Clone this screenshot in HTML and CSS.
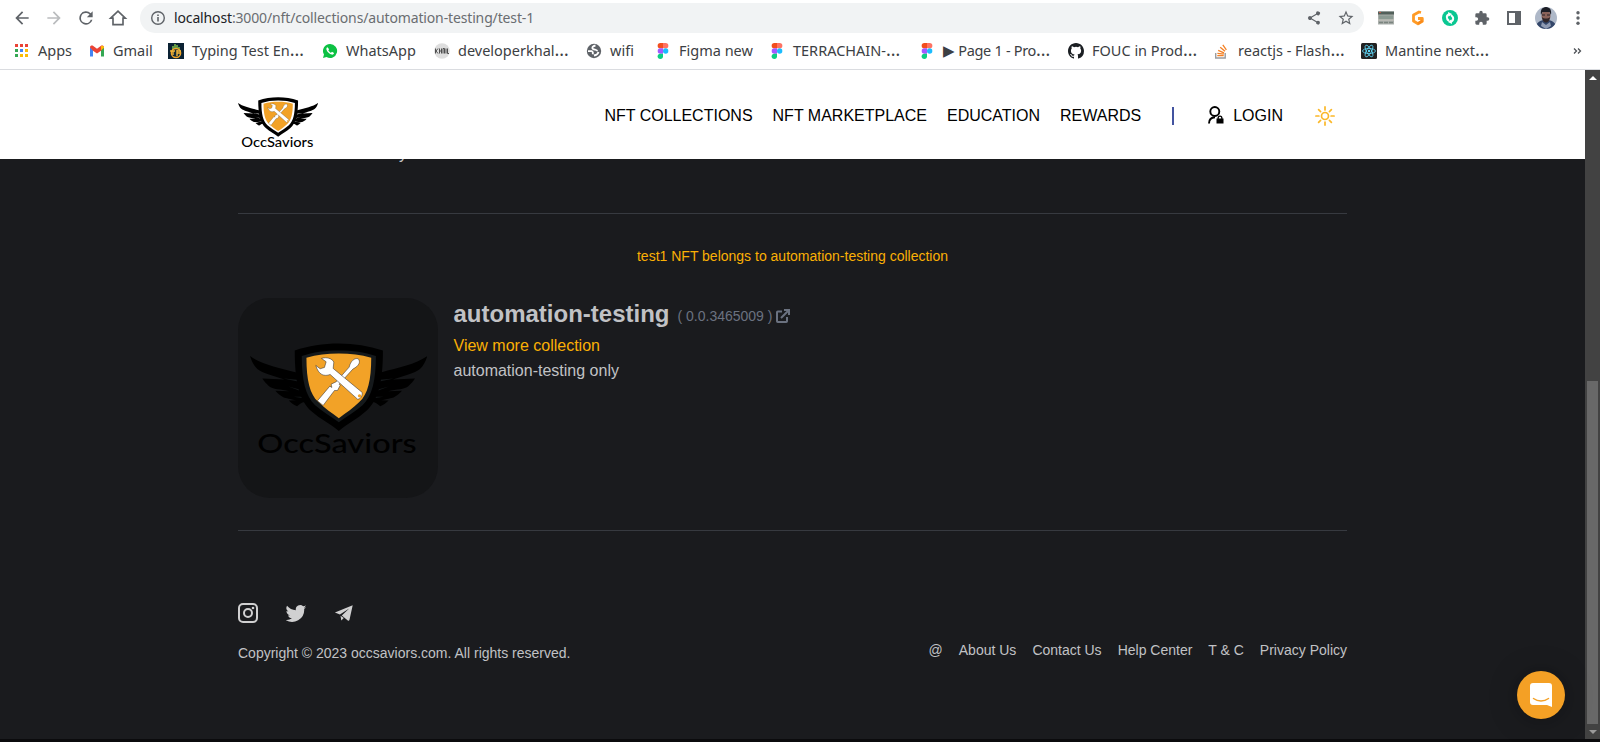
FILE: index.html
```html
<!DOCTYPE html>
<html lang="en">
<head>
<meta charset="utf-8">
<title>test-1 | OccSaviors</title>
<link rel="stylesheet" href="styles.css">
</head>
<body>
<svg class="defs" aria-hidden="true">
  <symbol id="logo" viewBox="75 174 530 350" overflow="visible">
    <g id="wing-left">
      <path class="ink" d="M75 213C110 238 160 247 214 262L246 352C232 346 226 356 216 363C208 360 198 354 191 346L214 345C196 343 182 338 176 337C166 331 158 326 151 317L192 318C168 312 142 312 132 303C124 296 117 288 112 280L178 283C148 274 112 264 97 252C86 242 80 228 75 213Z"/>
      <path class="gap" d="M176 280L216 284L218 289ZM190 304L226 314L228 318ZM206 335L236 335L236 339Z"/>
    </g>
    <use href="#wing-left" transform="translate(681 0) scale(-1 1)"/>
    <path class="ink" d="M209 196C250 182 295 175 341 175C387 175 430 182 473 196C473 290 460 345 422 378C395 402 368 414 341 437C314 414 286 402 259 378C222 345 209 290 209 196Z"/>
    <path class="ring" d="M230 213C265 201 300 196 341 196C382 196 417 201 452 213C452 285 441 333 412 360C390 380 365 392 341 411C317 392 292 380 270 360C241 333 230 285 230 213Z"/>
    <path class="gold" d="M244 218C275 208 306 205 341 205C376 205 407 208 438 218C438 285 428 327 403 350C384 370 362 383 341 399C320 383 298 370 279 350C254 327 244 285 244 218Z"/>
    <path class="tool" d="M277 347L314 303L320 307L318 297L333 290L372 246C376 228 388 218 399 221C407 230 402 242 383 252L342 297L345 301L337 316L328 316L300 353L294 361Z"/>
    <path class="tool" d="M289 220C304 215 321 220 326 231L324 250L411 322C412 334 405 342 397 342L315 268C298 275 280 270 272 241L285 251L298 247L303 230Z"/>
    <circle class="gold" cx="403" cy="332" r="5"/>
    <text class="ink wordmark" x="97" y="503" font-size="82" textLength="477" lengthAdjust="spacingAndGlyphs">OccSaviors</text>
  </symbol>
  <symbol id="figma" viewBox="0 0 10 15">
    <path fill="#f24e1e" d="M5 0H2.5a2.5 2.5 0 0 0 0 5H5z"/><path fill="#ff7262" d="M5 0h2.5a2.5 2.5 0 0 1 0 5H5z"/>
    <path fill="#a259ff" d="M5 5H2.5a2.5 2.5 0 0 0 0 5H5z"/><circle fill="#1abcfe" cx="7.5" cy="7.5" r="2.5"/>
    <path fill="#0acf83" d="M5 10H2.5A2.5 2.5 0 1 0 5 12.5z"/>
  </symbol>
</svg>

<div class="browser">
  <div class="toolbar">
    <div class="nav-buttons">
      <svg viewBox="0 0 24 24"><path fill="#5f6368" d="M20 11H7.83l5.59-5.59L12 4l-8 8 8 8 1.41-1.41L7.83 13H20z"/></svg>
      <svg viewBox="0 0 24 24"><path fill="#babcbe" d="M12 4l-1.41 1.41L16.17 11H4v2h12.17l-5.58 5.59L12 20l8-8z"/></svg>
      <svg viewBox="0 0 24 24"><path fill="#5f6368" d="M17.65 6.35A8 8 0 1 0 19.73 14h-2.08A6 6 0 1 1 12 6c1.66 0 3.14.69 4.22 1.78L13 11h7V4z"/></svg>
      <svg viewBox="0 0 24 24"><path fill="none" stroke="#5f6368" stroke-width="2" d="M3.2 12.2L12 3.8l8.800 8.4H18V20H6v-7.800z"/></svg>
    </div>
    <div class="omnibox">
      <svg class="info" viewBox="0 0 16 16"><circle cx="8" cy="8" r="6.300" fill="none" stroke="#5f6368" stroke-width="1.400"/><path fill="#5f6368" d="M7.200 7h1.600v4.500H7.200zM7.200 4.400h1.600V6H7.200z"/></svg>
      <span class="url"><b>localhost</b>:3000/nft/collections/automation-testing/test-1</span>
      <svg class="share" viewBox="0 0 24 24"><path fill="#5f6368" d="M18 16.080c-.76 0-1.440.3-1.960.770L8.910 12.700a3 3 0 0 0 0-1.390l7.050-4.110A3 3 0 1 0 15 5c0 .24.040.47.090.7L8.040 9.810a3 3 0 1 0 0 4.380l7.120 4.160A2.920 2.920 0 1 0 18 16.080z"/></svg>
      <svg class="star" viewBox="0 0 24 24"><path fill="#5f6368" fill-rule="evenodd" d="M22 9.240l-7.190-.62L12 2 9.190 8.630 2 9.240l5.460 4.730L5.820 21 12 17.270 18.180 21l-1.630-7.030zM12 15.400l-3.760 2.270 1-4.280-3.320-2.880 4.380-.38L12 6.100l1.710 4.040 4.380.38-3.320 2.880 1 4.280z"/></svg>
    </div>
    <div class="extensions">
      <svg viewBox="0 0 16 16"><path fill="#a9aeaa" d="M0 1.500h16v13H0z"/><path fill="#52605a" d="M0 1.500h16v3H0z"/><path fill="#c05848" d="M1 2h2v1H1z"/><path fill="#8b9a92" d="M1 5.500h14v4H1z"/><path stroke="#c9c6bf" d="M0 10h16"/><path stroke="#7b857f" stroke-width="1.500" d="M1 12.500h14" stroke-dasharray="4 1"/></svg>
      <svg viewBox="0 0 16 16"><path fill="none" stroke="#ff9b26" stroke-width="2.800" stroke-linejoin="round" d="M11 2.500L9 2 3.500 5v6l4.500 2.800 4.300-2.600V8.500H8"/><path fill="none" stroke="#f98a1c" stroke-width="2.600" d="M12.500 10.500L8 13.600"/></svg>
      <svg viewBox="0 0 16 16"><circle cx="8" cy="8" r="8" fill="#0ac792"/><g fill="none" stroke="#fff" stroke-width="2"><path d="M7.500 4.300C4 5 4 8.500 7 11M8.500 11.700C12 11 12 7.500 9 5"/></g><path fill="#fff" d="M6 2l4 2-3.500 2.800zM10 14l-4-2 3.500-2.800z"/></svg>
      <svg viewBox="0 0 24 24"><path fill="#5f6368" d="M20.500 11H19V7a2 2 0 0 0-2-2h-4V3.500a2.500 2.500 0 0 0-5 0V5H4a2 2 0 0 0-2 2v3.800h1.500a2.700 2.700 0 0 1 0 5.400H2V20a2 2 0 0 0 2 2h3.800v-1.500a2.700 2.700 0 0 1 5.400 0V22H17a2 2 0 0 0 2-2v-4h1.500a2.500 2.500 0 0 0 0-5z"/></svg>
      <svg viewBox="0 0 16 16"><path fill="#5f6368" fill-rule="evenodd" d="M1 1h14v14H1zM3 3v10h6V3z"/></svg>
      <svg class="avatar" viewBox="0 0 22 22"><clipPath id="face"><circle cx="11" cy="11" r="11"/></clipPath><g clip-path="url(#face)"><path fill="#aeb8c8" d="M0 0h22v22H0z"/><path fill="#34476a" d="M0 22c1-6 4-8 8-9h6c4 1 7 3 8 9z"/><ellipse cx="11" cy="9" rx="4.500" ry="6" fill="#8a6259"/><path fill="#1d1e26" d="M6 8C5 2 8 0 11 0s6 2 5 8l-1.500-3h-7z"/><path fill="#302629" d="M7 10c2 2 6 2 8 0-.5 4-2 5.500-4 5.500S7.500 14 7 10z"/><path stroke="#282026" d="M7 8h3M12 8h3"/><path fill="#8e9ab2" d="M7 15l4 3 4-3 1 4-5 3-5-3z"/></g></svg>
      <svg viewBox="0 0 16 16"><g fill="#5f6368"><circle cx="8" cy="2.700" r="1.700"/><circle cx="8" cy="8" r="1.700"/><circle cx="8" cy="13.300" r="1.700"/></g></svg>
    </div>
  </div>
  <div class="bookmarks">
    <a class="bm"><svg viewBox="0 0 16 16"><path stroke="#ea4335" stroke-width="3" d="M1 2.500h3M6 2.500h3M11 2.500h3"/><path stroke="#34a853" stroke-width="3" d="M1 7.500h3M1 12.500h3"/><path stroke="#4285f4" stroke-width="3" d="M6 7.500h3"/><path stroke="#fbbc04" stroke-width="3" d="M11 7.500h3M6 12.500h3M11 12.500h3"/></svg><span>Apps</span></a>
    <a class="bm"><svg viewBox="0 0 16 16"><path fill="#4285f4" d="M1 4v9.500h3V7z"/><path fill="#34a853" d="M15 4v9.500h-3V7z"/><path fill="#ea4335" d="M1 4.500C1 2.500 3 2 4.300 3L8 5.800 11.700 3C13 2 15 2.500 15 4.500L12 7.800 8 10.500 4 7.800z"/><path fill="#fbbc04" d="M12 3.200c1.300-1 3-.5 3 1.600l-3 2.500z"/></svg><span>Gmail</span></a>
    <a class="bm"><svg viewBox="0 0 16 16"><path fill="#0b2233" d="M0 0h16v16H0z"/><path stroke="#7ab648" stroke-width="1.600" d="M5 7V3M7 6V1M9 6V2M11 7V4"/><circle cx="8" cy="10" r="4.600" fill="#152b36" stroke="#f0a52b" stroke-width="1.500"/><path stroke="#f2b63b" stroke-width="1.400" d="M2 8h5M5 8v4M9 7v6M9 8h4M9 10h3"/></svg><span>Typing Test En<i>…</i></span></a>
    <a class="bm"><svg viewBox="0 0 16 16"><path fill="#0cc143" d="M8 1a7 7 0 0 0-6 10.600L1 15l3.500-1A7 7 0 1 0 8 1z"/><path fill="#fff" d="M5.500 4.200c-.9.300-1.400 1.400-1 2.600.8 2.300 3 4.400 5.300 4.800 1.100.2 2-.7 2.200-1.700L10 8.800l-1 1C7.900 9.400 6.900 8.400 6.300 7.200l.8-.9z"/></svg><span>WhatsApp</span></a>
    <a class="bm"><svg viewBox="0 0 16 16"><circle cx="8" cy="8" r="7.800" fill="#dedede"/><path stroke="#4f4f4f" fill="none" d="M1.500 5.500v5M4 5.500L2 8l2 2.500M5.500 5.500v5M5.500 8h2M7.500 5.500v5M9 10.500v-5h1.500v5M12 5.500v5M13.500 5.500v5h1.500"/></svg><span>developerkhal<i>…</i></span></a>
    <a class="bm"><svg viewBox="0 0 16 16"><circle cx="8" cy="8" r="7.200" fill="#5f6368"/><path fill="none" stroke="#fff" stroke-width="1.800" d="M9.500 2.500C6.500 3 5.500 5 7 6s4.200.3 4.300 2.300M2 8.200h3.500c1.500.6 1.800 1.800 1 3M12.500 9c-.5 2-2.300 3.200-4.500 3.500"/></svg><span>wifi</span></a>
    <a class="bm"><svg><use href="#figma"/></svg><span>Figma new</span></a>
    <a class="bm"><svg><use href="#figma"/></svg><span>TERRACHAIN-<i>…</i></span></a>
    <a class="bm tight"><svg><use href="#figma"/></svg><span>▶ Page 1 - Pro<i>…</i></span></a>
    <a class="bm"><svg viewBox="0 0 16 16"><path fill="#1b1f23" d="M8 0C3.580 0 0 3.580 0 8c0 3.540 2.290 6.530 5.470 7.590.4.070.55-.17.55-.38 0-.19-.01-.82-.01-1.490-2.010.37-2.530-.49-2.690-.94-.09-.23-.48-.94-.82-1.130-.28-.15-.68-.52-.01-.53.63-.01 1.080.58 1.230.82.72 1.210 1.870.87 2.330.66.070-.52.280-.87.510-1.070-1.780-.2-3.640-.89-3.640-3.950 0-.87.310-1.590.82-2.150-.08-.2-.36-1.020.08-2.120 0 0 .67-.21 2.200.82a7.600 7.600 0 0 1 4 0c1.530-1.040 2.200-.82 2.200-.82.440 1.100.160 1.920.080 2.120.510.560.820 1.270.820 2.150 0 3.070-1.870 3.750-3.650 3.950.290.250.540.730.540 1.480 0 1.070-.01 1.930-.01 2.200 0 .21.150.460.550.380A8.010 8.010 0 0 0 16 8c0-4.420-3.580-8-8-8z"/></svg><span>FOUC in Prod<i>…</i></span></a>
    <a class="bm"><svg viewBox="0 0 16 16"><path fill="none" stroke="#9a9c9f" stroke-width="1.400" d="M1.700 10v5h9.500v-5"/><path stroke="#f48024" stroke-width="1.300" d="M3.300 12.700H9.700M3.400 10.300l6.400.9M4.200 7.300l5.800 2.500M6.200 4.300l4.800 4M8.800 1.800l3.600 5"/></svg><span>reactjs - Flash<i>…</i></span></a>
    <a class="bm"><svg viewBox="0 0 16 16"><rect width="16" height="16" rx="1.500" fill="#222"/><g fill="none" stroke="#61dafb" stroke-width=".8"><ellipse cx="8" cy="8" rx="6.500" ry="2.500"/><ellipse cx="8" cy="8" rx="6.500" ry="2.500" transform="rotate(60 8 8)"/><ellipse cx="8" cy="8" rx="6.500" ry="2.500" transform="rotate(120 8 8)"/></g><circle cx="8" cy="8" r="1.200" fill="#61dafb"/></svg><span>Mantine next<i>…</i></span></a>
    <svg class="more" viewBox="0 0 9 8"><path fill="none" stroke="#4d5156" stroke-width="1.300" d="M1 1.500L3.500 4 1 6.500M5 1.500L7.500 4 5 6.500"/></svg>
  </div>
</div>

<div class="viewport">
  <div class="page">
    <header class="site-header">
      <svg class="brand"><use href="#logo"/></svg>
      <nav class="menu">
        <a>NFT COLLECTIONS</a><a>NFT MARKETPLACE</a><a>EDUCATION</a><a>REWARDS</a>
      </nav>
      <span class="divider"></span>
      <a class="login">
        <svg viewBox="0 0 16 18"><g fill="none" stroke="#000" stroke-width="1.900"><circle cx="6.800" cy="5.500" r="4.500"/><path d="M1 17.500c0-3.600 2.200-6 6-6.200"/></g><path fill="#000" fill-rule="evenodd" d="M8.500 12.500h1V12a2.500 2.500 0 0 1 5 0v.5h1v5h-7zm2.300 0h2.400V12a1.200 1.200 0 0 0-2.400 0z"/></svg>
        <span>LOGIN</span>
      </a>
      <svg class="sun" viewBox="0 0 20 20"><g fill="none" stroke="#fbb829" stroke-width="1.700"><circle cx="10" cy="10" r="3.500"/><path stroke-linecap="round" d="M10 .9v3M10 16.100v3M.9 10h3M16.100 10h3M3.600 3.600l2 2M14.400 14.400l2 2M3.600 16.400l2-2M14.400 5.600l2-2"/></g></svg>
    </header>

    <main>
      <div class="scrolled"><p>y</p></div>
      <hr>
      <p class="caption">test1 NFT belongs to automation-testing collection</p>
      <section class="collection">
        <div class="thumb"><svg><use href="#logo"/></svg></div>
        <div class="details">
          <div class="heading">
            <h2>automation-testing</h2>
            <span class="token">( 0.0.3465009 )</span>
            <svg viewBox="0 0 14 14"><path fill="none" stroke="#6b7280" stroke-width="2" d="M6 2.500H1.800a.8.800 0 0 0-.8.800v8.900c0 .5.300.8.800.8h8.400c.5 0 .8-.3.800-.8V8M8 1h5v5M13 1L5 9"/></svg>
          </div>
          <a class="view-more">View more collection</a>
          <p>automation-testing only</p>
        </div>
      </section>
      <hr>
    </main>

    <footer>
      <div class="about">
        <div class="social">
          <svg viewBox="0 0 20 20"><g fill="none" stroke="#d0d0d1" stroke-width="2"><rect x="1" y="1" width="18" height="18" rx="4"/><circle cx="10" cy="10" r="4"/></g><circle cx="15" cy="5" r="1.300" fill="#d0d0d1"/></svg>
          <svg viewBox="2 2 20 20"><path fill="#d0d0d1" d="M22.460 6c-.77.350-1.600.580-2.460.690a4.300 4.300 0 0 0 1.880-2.380c-.83.500-1.750.850-2.720 1.050A4.280 4.280 0 0 0 11.870 9.260 12.130 12.130 0 0 1 3.050 4.790a4.280 4.280 0 0 0 1.320 5.710c-.7 0-1.360-.2-1.930-.5v.030c0 2.080 1.480 3.820 3.440 4.210a4.200 4.200 0 0 1-1.930.070 4.280 4.280 0 0 0 4 2.980A8.520 8.520 0 0 1 1.540 19a12.130 12.130 0 0 0 18.670-10.800c0-.19 0-.37-.010-.55A8.700 8.700 0 0 0 22.460 6z"/></svg>
          <svg viewBox="0 0 20 20"><path fill="#d0d0d1" d="M18.700 2.200L.9 9.600l5 1.900 9.300-6.100-7.400 7.200 6 4.900c.8.400 1.400.1 1.700-.8zM6.500 12.700l.8 4.800 2.500-2.400z"/></svg>
        </div>
        <p>Copyright © 2023 occsaviors.com. All rights reserved.</p>
      </div>
      <nav class="links"><a>@</a><a>About Us</a><a>Contact Us</a><a>Help Center</a><a>T &amp; C</a><a>Privacy Policy</a></nav>
    </footer>
  </div>
  <div class="scrollbar">
    <i class="arrow up"></i>
    <i class="thumb-bar"></i>
    <i class="arrow down"></i>
  </div>
</div>
<div class="screen-edge"></div>

<button class="chat" aria-label="Chat"><svg viewBox="0 0 22 24"><path fill="#fff" d="M3 0h16a3 3 0 0 1 3 3v21l-5-2H3a3 3 0 0 1-3-3V3a3 3 0 0 1 3-3z"/><path fill="none" stroke="#f4a025" stroke-width="1.500" stroke-linecap="round" d="M3.500 15.500c4.500 3.300 10.500 3.300 15 0"/></svg></button>
</body>
</html>
```

FILE: styles.css
```css
* { box-sizing: border-box; }

body {
  margin: 0;
  width: 1600px;
  height: 742px;
  overflow: hidden;
  display: flex;
  flex-direction: column;
  font-family: "Liberation Sans", Arial, sans-serif;
  background: #1a1b1e;
  --logo-ring: #fff;
}

p, h2 { margin: 0; }
svg { display: block; flex: none; }
.defs { position: absolute; width: 0; height: 0; }

/* Browser chrome */
.browser {
  flex: none;
  height: 70px;
  background: #fff;
  border-bottom: 1px solid #dadce0;
  font-family: "Noto Sans", "Open Sans", sans-serif;
}

.toolbar {
  height: 35px;
  padding: 3px 14px 2px 12px;
  display: flex;
  align-items: center;
}

.nav-buttons { display: flex; gap: 12px; width: 128px; }
.nav-buttons svg { width: 20px; height: 20px; }

.omnibox {
  width: 1224px;
  height: 30px;
  padding: 0 9px 0 10px;
  border-radius: 15px;
  background: #f1f3f4;
  display: flex;
  align-items: center;
}

.info { width: 16px; height: 16px; }
.url { flex: 1; margin-left: 8px; padding-bottom: 2px; font-size: 14px; letter-spacing: -.14px; color: #6a6d71; }
.url b { font-weight: 400; color: #202124; }
.share { width: 16px; height: 16px; margin-right: 15px; }
.star { width: 18px; height: 18px; }

.extensions { flex: 1; padding-left: 14px; display: flex; align-items: center; gap: 16px; }
.extensions svg { width: 16px; height: 16px; }
.extensions .avatar { width: 22px; height: 22px; margin: 0 -3px; }

.bookmarks {
  display: grid;
  grid-template-columns: 75px 79px 154px 112px 152px 69px 114px 150px 149px 146px 147px 212px 9px;
  align-items: center;
  height: 32px;
  padding-left: 14px;
}

.bm {
  display: flex;
  align-items: center;
  gap: 8px;
  height: 24px;
  font-size: 14.5px;
  line-height: 22px;
  white-space: nowrap;
  color: #3c4043;
}

.bm span { height: 24px; }
.bm i { font-style: normal; font-size: 18px; line-height: 0; }
.tight { letter-spacing: -.3px; }
.bm svg { width: 16px; height: 16px; }
.more { width: 9px; height: 8px; }

/* Page */
.viewport { flex: none; height: 669px; display: flex; }
.page { width: 1585px; color: #c1c2c5; }

.site-header {
  position: relative;
  z-index: 1;
  height: 89px;
  padding: 0 250px 0 238px;
  display: flex;
  align-items: center;
  background: #fff;
  color: #000;
  font-size: 16px;
}

.brand { width: 80px; height: 53px; margin-top: 18px; }
.menu { margin-left: auto; padding-top: 2px; display: flex; gap: 20px; }
.divider { width: 2px; height: 18px; margin: 3px 34px 0 31px; background: #4354a0; }
.login { display: flex; align-items: center; gap: 9px; }
.login span { padding-top: 2px; }
.login svg { width: 16px; height: 18px; }
.sun { width: 20px; height: 20px; margin: 3px 0 0 32px; }

.ink { fill: #000; }
.gold { fill: #f2a227; }
.tool { fill: #fff; stroke: #22252a; stroke-width: 1.5; }
.ring, .gap { fill: var(--logo-ring); }
.wordmark { font-family: Lato, sans-serif; font-weight: 500; }

main { padding: 0 238px; }
hr { margin: 0; border: 0; height: 1px; background: #373a40; }

/* Last line of the description, passing under the sticky header */
.scrolled { display: flow-root; height: 54px; padding-left: 161px; }
.scrolled p { margin-top: -14px; font-size: 16px; line-height: 18px; }

.caption {
  margin: 31px 0;
  font-size: 14px;
  line-height: 22px;
  text-align: center;
  color: #fab005;
}

.collection { display: flex; gap: 15.500px; margin-bottom: 32px; }

.thumb {
  --logo-ring: #15191b;
  width: 200px;
  height: 200px;
  padding: 45px 0 0 12px;
  border-radius: 32px;
  background: #141517;
}

.thumb svg { width: 177px; height: 117px; }

.details { line-height: 25px; font-size: 16px; }
.heading { display: flex; align-items: baseline; height: 32px; margin-bottom: 3px; }
.heading h2 { font-size: 24px; line-height: 32px; }
.heading svg { width: 14px; height: 14px; margin-left: 3.500px; align-self: center; margin-top: 3px; }
.token { margin-left: 8px; padding-bottom: 1px; font-size: 14px; color: #6b7280; transform: translateY(-1px); }
.view-more { color: #fab005; }

footer {
  padding: 72px 238px 0;
  display: flex;
  justify-content: space-between;
  align-items: flex-end;
  font-size: 14px;
  line-height: 22px;
}

.social { display: flex; gap: 28px; margin-bottom: 19px; }
.social svg { width: 20px; height: 20px; }
.links { display: flex; gap: 16px; margin-bottom: 3px; }

/* Scrollbar */
.scrollbar {
  width: 15px;
  background: #424242;
  display: flex;
  flex-direction: column;
  align-items: center;
}

.arrow { width: 0; height: 0; border: 4px solid transparent; }
.up { margin-top: 2px; border-bottom-color: #fff; }
.down { margin-top: 6px; border-top-color: #9a9a9a; }
.thumb-bar { width: 11px; height: 343px; margin-top: 301px; background: #686868; }

.screen-edge { flex: 1; background: #0b0b0d; }

.chat {
  position: absolute;
  left: 1517px;
  top: 671px;
  width: 48px;
  height: 48px;
  padding: 0;
  border: 0;
  border-radius: 50%;
  background: #f4a025;
  box-shadow: 0 1px 6px rgba(0, 0, 0, .1), 0 2px 32px rgba(0, 0, 0, .2);
  display: flex;
  align-items: center;
  justify-content: center;
}

.chat svg { width: 22px; height: 24px; }
```
